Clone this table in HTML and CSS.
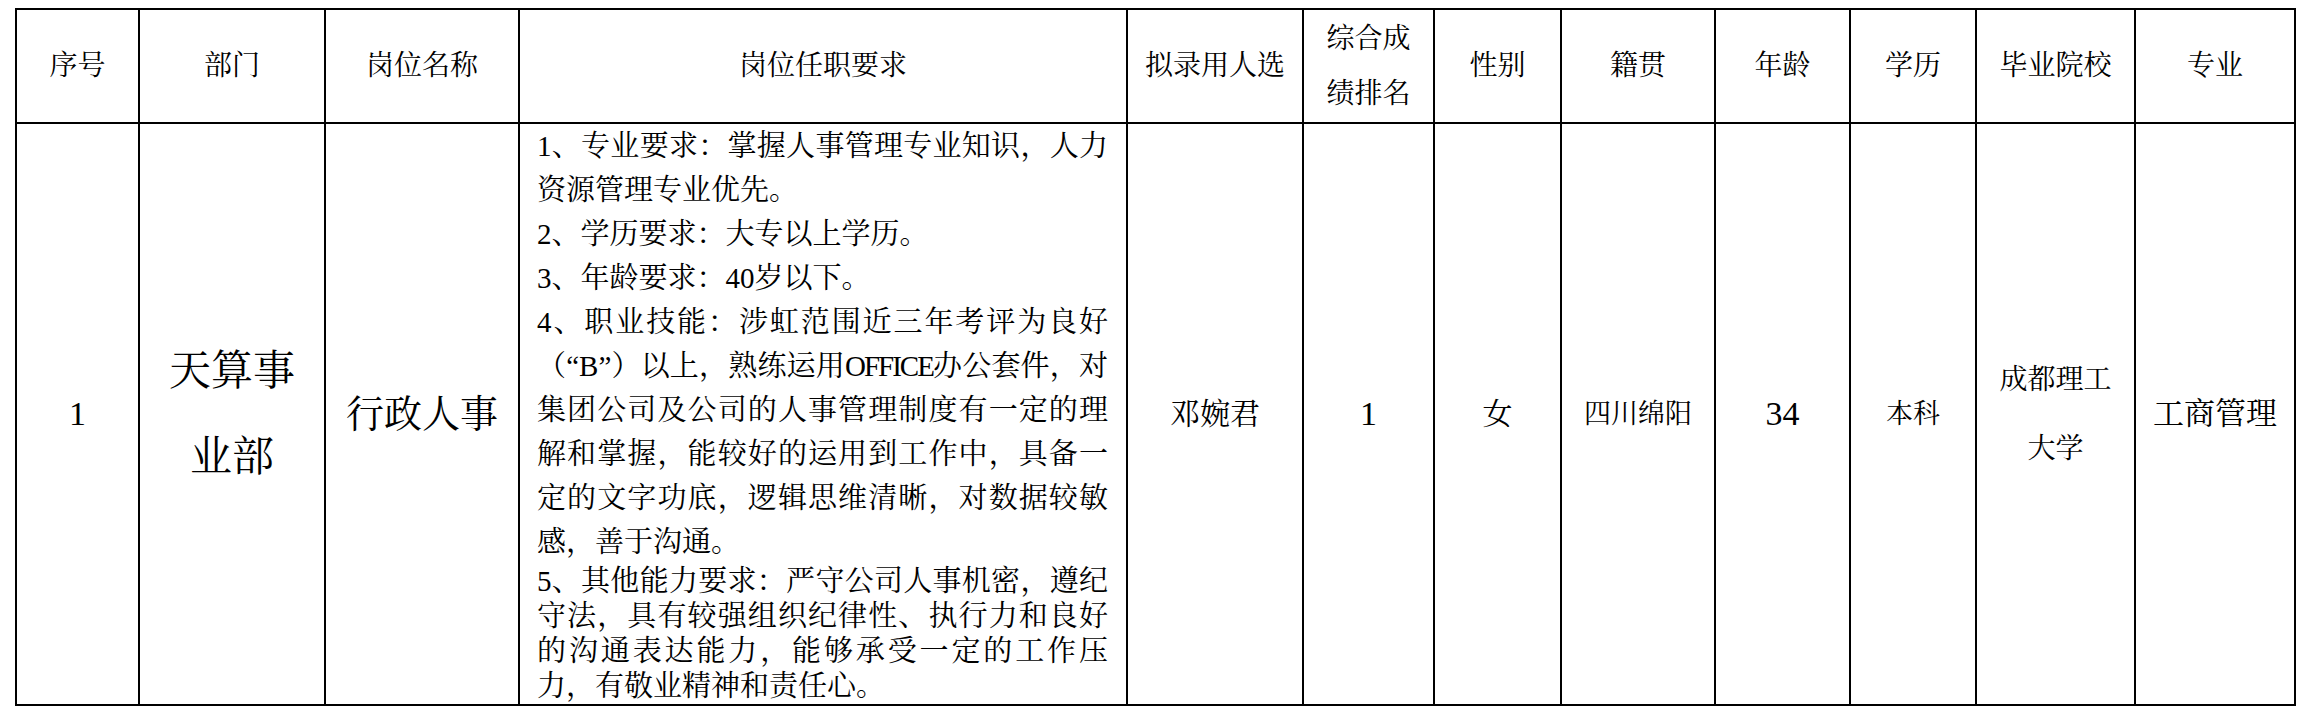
FILE: index.html
```html
<!DOCTYPE html>
<html lang="zh-CN">
<head>
<meta charset="utf-8">
<title>拟录用人员公示</title>
<link rel="stylesheet" href="styles.css">
</head>
<body>
<table class="grid">
  <colgroup>
    <col class="c1"><col class="c2"><col class="c3"><col class="c4">
    <col class="c5"><col class="c6"><col class="c7"><col class="c8">
    <col class="c9"><col class="c10"><col class="c11"><col class="c12">
  </colgroup>
  <thead>
    <tr class="head">
      <th>序号</th>
      <th>部门</th>
      <th>岗位名称</th>
      <th>岗位任职要求</th>
      <th>拟录用人选</th>
      <th class="two">综合成<br>绩排名</th>
      <th>性别</th>
      <th>籍贯</th>
      <th>年龄</th>
      <th>学历</th>
      <th>毕业院校</th>
      <th>专业</th>
    </tr>
  </thead>
  <tbody>
    <tr class="row">
      <td class="num">1</td>
      <td class="dept">天算事<br>业部</td>
      <td class="post">行政人事</td>
      <td class="req">
        <div class="para wide">
          <span class="ln j">1、专业要求：掌握人事管理专业知识，人力</span>
          <span class="ln">资源管理专业优先。</span>
          <span class="ln">2、学历要求：大专以上学历。</span>
          <span class="ln">3、年龄要求：40岁以下。</span>
          <span class="ln j">4、职业技能：涉虹范围近三年考评为良好</span>
          <span class="ln j">（“B”）以上，熟练运用<span class="latin">OFFICE</span>办公套件，对</span>
          <span class="ln j">集团公司及公司的人事管理制度有一定的理</span>
          <span class="ln j">解和掌握，能较好的运用到工作中，具备一</span>
          <span class="ln j">定的文字功底，逻辑思维清晰，对数据较敏</span>
          <span class="ln">感，善于沟通。</span>
        </div>
        <div class="para tight">
          <span class="ln j">5、其他能力要求：严守公司人事机密，遵纪</span>
          <span class="ln j">守法，具有较强组织纪律性、执行力和良好</span>
          <span class="ln j">的沟通表达能力，能够承受一定的工作压</span>
          <span class="ln">力，有敬业精神和责任心。</span>
        </div>
      </td>
      <td class="name">邓婉君</td>
      <td class="num">1</td>
      <td class="name">女</td>
      <td class="small">四川绵阳</td>
      <td class="num">34</td>
      <td class="small">本科</td>
      <td class="school">成都理工<br>大学</td>
      <td class="major">工商管理</td>
    </tr>
  </tbody>
</table>
</body>
</html>
```

FILE: styles.css
```css
html, body {
  margin: 0;
  padding: 0;
  background: #ffffff;
}

body {
  color: #000000;
  font-family: "Liberation Serif", "Noto Serif CJK SC", "Noto Sans CJK SC", serif;
}

.grid {
  margin: 8px 0 0 15px;
  width: 2281px;
  table-layout: fixed;
  border-collapse: collapse;
}

.c1 { width: 123px; }
.c2 { width: 186px; }
.c3 { width: 194px; }
.c4 { width: 608px; }
.c5 { width: 176px; }
.c6 { width: 131px; }
.c7 { width: 127px; }
.c8 { width: 154px; }
.c9 { width: 135px; }
.c10 { width: 126px; }
.c11 { width: 159px; }
.c12 { width: 160px; }

.grid th,
.grid td {
  border: 2px solid #000000;
  padding: 0;
  text-align: center;
  vertical-align: middle;
  color: #000000;
}

.head {
  height: 114px;
}

.head th {
  font-size: 28px;
  font-weight: normal;
  line-height: 36px;
}

.head th.two {
  line-height: 55px;
}

.row td {
  font-size: 29px;
  line-height: 36px;
}

.row td.num {
  font-size: 34px;
}

.row td.dept {
  font-size: 42px;
  line-height: 86px;
}

.row td.post {
  font-size: 38px;
}

.row td.name {
  font-size: 30px;
}

.row td.small {
  font-size: 27px;
}

.row td.school {
  font-size: 28px;
  line-height: 69px;
}

.row td.major {
  font-size: 31px;
}

.row td.req {
  padding: 0 18px 0 17px;
  text-align: left;
  font-size: 29px;
}

.para .ln {
  display: block;
  white-space: nowrap;
  text-align: left;
}

.para.wide .ln {
  line-height: 44px;
}

.para.tight .ln {
  line-height: 35px;
}

.para .ln.j {
  text-align: justify;
  text-align-last: justify;
}

.latin {
  letter-spacing: -2px;
}
```
